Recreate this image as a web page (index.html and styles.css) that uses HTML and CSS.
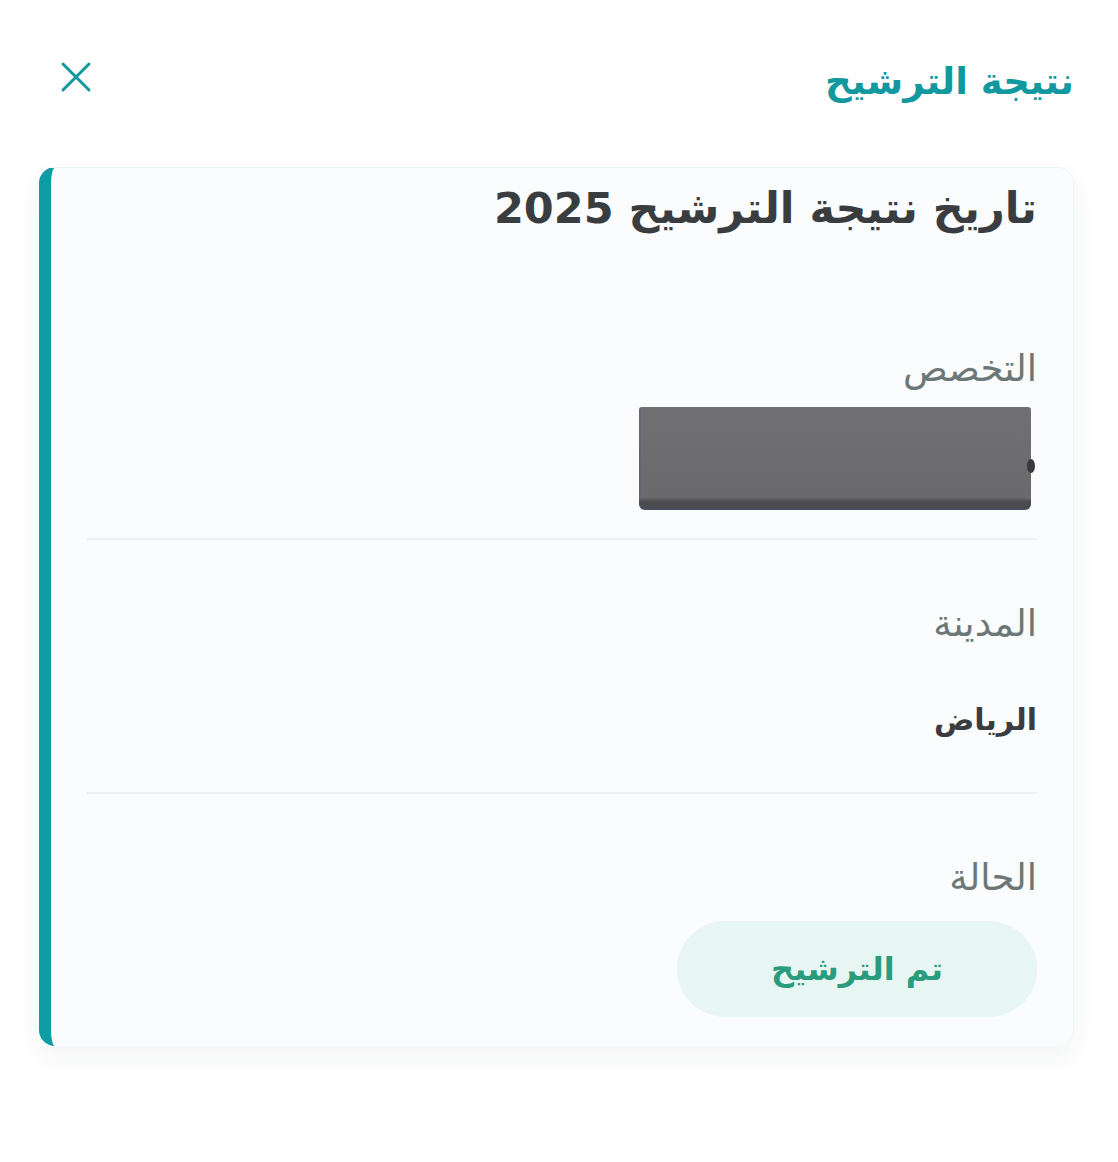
FILE: index.html
```html
<!DOCTYPE html>
<html lang="ar" dir="rtl">
<head>
<meta charset="utf-8">
<title>نتيجة الترشيح</title>
<link rel="stylesheet" href="styles.css">
</head>
<body>
<div class="modal">
  <header class="modal-header">
    <h1 class="modal-title">نتيجة الترشيح</h1>
    <button class="close-btn" aria-label="إغلاق">
      <svg viewBox="0 0 32 32" width="32" height="32"><path d="M3 3 L29 29 M29 3 L3 29" stroke="#12999f" stroke-width="3" stroke-linecap="round" fill="none"/></svg>
    </button>
  </header>
  <section class="card">
    <h2 class="card-title">تاريخ نتيجة الترشيح 2025</h2>
    <div class="field field-first">
      <div class="label">التخصص</div>
      <div class="redacted"><span class="dot"></span></div>
    </div>
    <div class="field">
      <div class="label">المدينة</div>
      <div class="value">الرياض</div>
    </div>
    <div class="field field-last">
      <div class="label">الحالة</div>
      <div class="pill">تم الترشيح</div>
    </div>
  </section>
</div>
</body>
</html>
```
FILE: styles.css
```css
html, body {
  margin: 0;
  padding: 0;
  background: #ffffff;
}
body {
  font-family: "DejaVu Sans", "Noto Sans", sans-serif;
  direction: rtl;
}
.modal {
  width: 1118px;
  height: 1162px;
  box-sizing: border-box;
  padding: 0 44px 0 39px;
  background: #ffffff;
}
.modal-header {
  display: flex;
  align-items: center;
  justify-content: space-between;
  height: 167px;
  padding: 0 0 0 21px;
  box-sizing: border-box;
}
.modal-title {
  margin: 0;
  font-size: 37px;
  font-weight: 700;
  color: #12999f;
  line-height: 48px;
  margin-top: -3px;
}
.close-btn {
  border: 0;
  background: transparent;
  padding: 0;
  width: 32px;
  height: 32px;
  margin-top: -14px;
  cursor: pointer;
}
.close-btn svg { display: block; }
.card {
  background: #fbfcfd;
  border-left: 12px solid #0e9ca5;
  border-top: 1px solid #edf6f7;
  border-right: 1px solid #eef6f7;
  border-radius: 16px;
  box-shadow: 0 10px 26px rgba(30, 50, 60, 0.06);
  padding: 9px 36px 30px 36px;
  height: 879px;
  box-sizing: border-box;
}
.card-title {
  margin: 0;
  font-size: 43px;
  font-weight: 700;
  line-height: 62px;
  color: #3a3d40;
}
.field {
  padding: 60px 0 48px;
  border-bottom: 2px solid #eef1f4;
}
.field-first {
  padding-top: 106px;
  padding-bottom: 28px;
}
.field-last {
  border-bottom: 0;
  padding-bottom: 0;
}
.label {
  font-size: 37px;
  line-height: 48px;
  color: #6c7878;
}
.value {
  margin-top: 48px;
  font-size: 30px;
  line-height: 48px;
  font-weight: 700;
  color: #3a3d40;
}
.redacted {
  position: relative;
  margin-top: 14px;
  margin-right: 6px;
  width: 392px;
  height: 103px;
  border-radius: 3px 3px 6px 6px;
  background: linear-gradient(180deg, #707072 0%, #6a6a6c 88%, #4c4c4e 92%, #4a4a4c 100%);
  box-shadow: inset 2px -2px 0 rgba(70, 80, 160, 0.25);
}
.redacted .dot {
  position: absolute;
  right: -4px;
  top: 52px;
  width: 8px;
  height: 14px;
  border-radius: 50%;
  background: #3a3a3c;
}
.pill {
  margin-top: 19px;
  width: 360px;
  height: 96px;
  border-radius: 48px;
  background: #e8f6f3;
  color: #2a9c7e;
  font-size: 32px;
  font-weight: 700;
  display: flex;
  align-items: center;
  justify-content: center;
}
```
